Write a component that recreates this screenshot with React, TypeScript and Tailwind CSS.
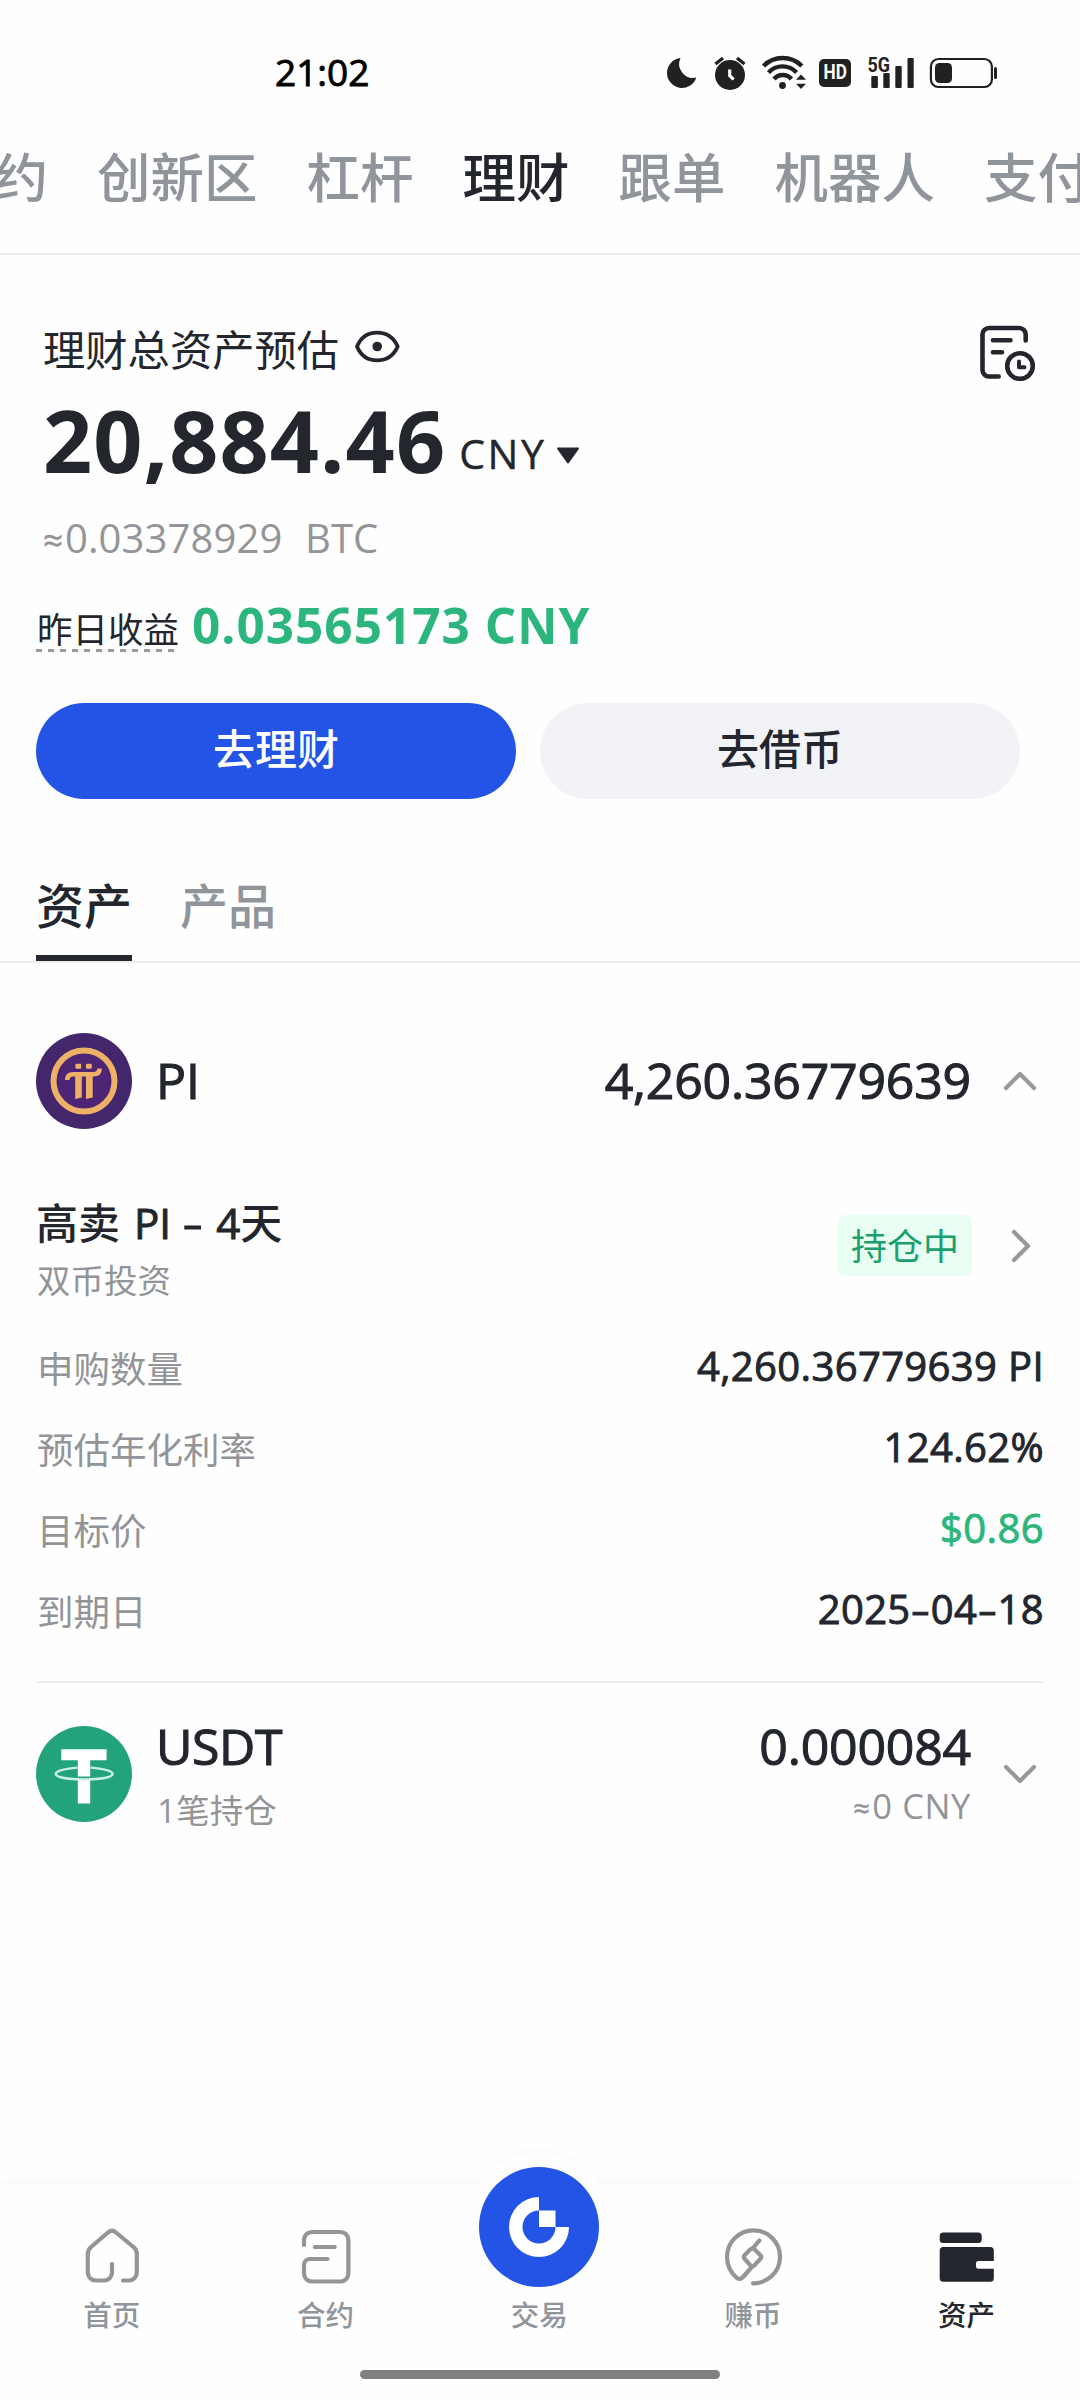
import React from 'react';

const tabs = ['合约', '创新区', '杠杆', '理财', '跟单', '机器人', '支付'];

const details = [
  { label: '申购数量', value: '4,260.36779639 PI', green: false },
  { label: '预估年化利率', value: '124.62%', green: false },
  { label: '目标价', value: '$0.86', green: true },
  { label: '到期日', value: '2025-04-18', green: false },
];

function StatusBar() {
  return (
    <div className="flex h-[145px] items-center pl-[275px]">
      <div className="w-[389px] pb-[2px] text-[37px] leading-[50px] text-black [-webkit-text-stroke:0.9px_currentColor]">21:02</div>
      <svg className="shrink-0" width="40" height="44" viewBox="664 50 40 44" fill="#212121">
        <path d="M680.5 57A15 15 0 1 0 696.3 76.5A14 14 0 0 1 680.5 57Z" />
      </svg>
      <svg className="shrink-0" width="50" height="44" viewBox="704 50 50 44">
        <circle cx="730" cy="74" r="15" fill="#212121" />
        <path d="M715.5 63L723 57M744.5 63L737 57" stroke="#212121" strokeWidth="3.4" />
        <path d="M729.7 68.5V74.5L733.6 78.5" stroke="#fff" strokeWidth="3.2" fill="none" />
      </svg>
      <svg className="shrink-0" width="58" height="44" viewBox="754 50 58 44">
        <g fill="none" stroke="#212121" strokeWidth="4.4">
          <path d="M763.5 65A27 27 0 0 1 801.8 65" />
          <path d="M768.5 71.5A19 19 0 0 1 796.5 71.5" />
          <path d="M774 78A11.5 11.5 0 0 1 791.5 78" />
        </g>
        <circle cx="782.5" cy="84.5" r="3.4" fill="#212121" />
        <path d="M796 78.7H806L801 73.5ZM796 82.8H806L801 88Z" fill="#212121" />
      </svg>
      <div className="ml-[7px] flex h-[28px] w-[32px] shrink-0 items-center justify-center rounded-[5px] bg-[#212121] text-[21px] font-bold text-white">
        <span className="scale-x-[0.82] font-['Roboto']">HD</span>
      </div>
      <svg className="ml-[9px] shrink-0" width="60" height="44" viewBox="860 50 60 44" fill="#212121">
        <text x="867.5" y="70.5" fontSize="20.5" fontWeight="700" fontFamily="Roboto" textLength="22.5" lengthAdjust="spacingAndGlyphs">5G</text>
        <rect x="871.3" y="75" width="6.6" height="12" rx="1" />
        <rect x="883.3" y="72" width="6.4" height="15" rx="1" />
        <rect x="895.3" y="65" width="6.4" height="22" rx="1" />
        <rect x="907.5" y="57" width="6.2" height="30" rx="1" />
      </svg>
      <svg className="shrink-0" width="80" height="44" viewBox="920 50 80 44">
        <rect x="930.9" y="58" width="61" height="28" rx="7.5" fill="none" stroke="#212121" strokeWidth="2.2" />
        <rect x="935" y="62" width="17" height="20" rx="4.5" fill="#212121" />
        <rect x="994" y="66" width="3" height="12" rx="1.5" fill="#212121" />
      </svg>
    </div>
  );
}

function TopTabs() {
  return (
    <div className="h-[110px] overflow-hidden border-b-2 border-[#ededef]">
      <div className="-ml-[59px] flex w-[1300px] gap-[49px] text-[53.5px] leading-[65px] font-medium whitespace-nowrap text-[#90949b]">
        {tabs.map((t) => (
          <span key={t} className={t === '理财' ? 'text-[#23262d]' : ''}>{t}</span>
        ))}
      </div>
    </div>
  );
}

function Summary() {
  return (
    <section className="pt-[67px]">
      <div className="flex h-[62px] items-start pl-[43px]">
        <span className="text-[42.3px] leading-[55px]">理财总资产预估</span>
        <svg className="mt-[3px] ml-[14px]" width="48" height="44" viewBox="353 325 48 44">
          <path d="M357 346.5C361 337 368 332.6 377 332.6S393.5 337 397.7 346.5C393.5 356 386 360.4 377 360.4S361 356 357 346.5Z" fill="none" stroke="#23262d" strokeWidth="3.8" strokeLinejoin="round" />
          <circle cx="377.2" cy="346.5" r="4.8" fill="#23262d" />
        </svg>
        <svg className="mr-[42px] ml-auto" width="60" height="62" viewBox="978 322 60 62" fill="none" stroke="#23262d" strokeWidth="4.6" strokeLinecap="round" strokeLinejoin="round">
          <path d="M1025.7 340.5V334.5A6.5 6.5 0 0 0 1019.2 328H989A6.5 6.5 0 0 0 982.5 334.5V370A6.5 6.5 0 0 0 989 376.5H998.7" />
          <path d="M993 340.3H1010.5M993 352.2H1002" />
          <circle cx="1020" cy="366" r="12.8" />
          <path d="M1019 361.5V367.3H1024.5" strokeWidth="4" />
        </svg>
      </div>
      <div className="mt-[2px] flex h-[108px] items-end pl-[43px]">
        <span className="text-[86px] leading-[108px] font-bold tracking-[1.1px]">20,884.46</span>
        <span className="ml-[13px] text-[41px] leading-[81px] tracking-[2.6px] [-webkit-text-stroke:0.4px_currentColor]">CNY</span>
        <svg className="mb-[27px] ml-[8px]" width="26" height="22" viewBox="0 0 26 22">
          <path d="M3 3.5H23L13 17.5Z" fill="#23262d" stroke="#23262d" strokeWidth="2" strokeLinejoin="round" />
        </svg>
      </div>
      <div className="mt-[19px] flex pl-[43px] text-[40px] leading-[50px] tracking-[0.1px] text-[#939598]">
        <span className="w-[262px] whitespace-nowrap">
          <span className="inline-block w-[22px] text-[35px] leading-[30px] [-webkit-text-stroke:0.5px_currentColor]">≈</span>0.03378929
        </span>
        <span>BTC</span>
      </div>
      <div className="mt-[30px] flex h-[60px] pl-[36px]">
        <div className="mt-[17px] w-[143px]">
          <div className="pl-[1px] text-[35.5px] leading-[39px] whitespace-nowrap">昨日收益</div>
          <div className="h-[3px] w-[139px] bg-[repeating-linear-gradient(to_right,#97999c_0_6px,transparent_6px_12px)]" />
        </div>
        <span className="ml-[13px] pt-[1px] text-[49.5px] leading-[62px] font-bold tracking-[1px] whitespace-nowrap text-[#2cb67d]">0.03565173 CNY</span>
      </div>
      <div className="mt-[50px] flex gap-[24px] pl-[36px] text-[42px] font-medium">
        <button className="h-[96px] w-[480px] rounded-full bg-[#2354e6] pb-[6px] text-white">去理财</button>
        <button className="h-[96px] w-[480px] rounded-full bg-[#f1f3f7] pb-[6px]">去借币</button>
      </div>
    </section>
  );
}

function Chevron({ direction }: { direction: 'up' | 'down' | 'right' }) {
  const d = {
    up: 'M6 27L20 13L34 27',
    down: 'M6 13L20 27L34 13',
    right: 'M14 6L28 20L14 34',
  }[direction];
  return (
    <svg className="shrink-0" width="40" height="40" viewBox="0 0 40 40" fill="none" stroke="#97999c" strokeWidth="4.2" strokeLinecap="round" strokeLinejoin="round">
      <path d={d} />
    </svg>
  );
}

/* Hyphens are drawn wider than the font's own. */
function WideHyphens({ text }: { text: string }) {
  return (
    <>
      {text.split('').map((c, i) =>
        c === '-' ? <span key={i} className="mx-[3.5px] inline-block scale-x-150">-</span> : <React.Fragment key={i}>{c}</React.Fragment>,
      )}
    </>
  );
}

function PiLogo() {
  return (
    <svg width="96" height="96" viewBox="36 1033 96 96">
      <circle cx="84" cy="1081" r="48" fill="#43266b" />
      <circle cx="84" cy="1081" r="30.5" fill="#4d2574" stroke="#eeb168" strokeWidth="6" />
      <g fill="#eeb168">
        <rect x="75.4" y="1063.8" width="5.8" height="5" rx="1" />
        <rect x="86" y="1063.8" width="5.8" height="5" rx="1" />
        <path d="M75.2 1074H81.8V1097.5L75.2 1099ZM86 1074H92.7V1097.5L86 1099Z" />
      </g>
      <path d="M67.3 1080C67.3 1076 69.5 1074.2 73 1074.2H93.5C97.5 1074.2 99.6 1072.5 99.6 1068.5" fill="none" stroke="#eeb168" strokeWidth="4.6" />
    </svg>
  );
}

function TetherLogo() {
  return (
    <svg width="96" height="96" viewBox="36 1726 96 96">
      <circle cx="84" cy="1774" r="48" fill="#23a37c" />
      <path d="M61.3 1749.2H106.6V1760.3H90.2V1776.5H77.8V1760.3H61.3ZM77.8 1780H90.2V1803.5H77.8Z" fill="#fff" />
      <path d="M77.5 1767.6C66 1768.5 55.8 1770.6 55.8 1773.8C55.8 1777.6 68 1779.4 84.2 1779.4S112.6 1777.6 112.6 1773.8C112.6 1770.6 102 1768.5 90.5 1767.6" fill="none" stroke="#c9f0e2" strokeWidth="2.4" />
    </svg>
  );
}

function Assets() {
  return (
    <>
      <div className="flex h-[164px] gap-[48px] border-b-2 border-[#ededef] pt-[76px] pl-[36px] text-[48px] leading-[61px] font-medium">
        <div className="flex h-[86px] w-[96px] flex-col justify-between">
          <span>资产</span>
          <div className="h-[6px] bg-[#23262d]" />
        </div>
        <span className="text-[#90949b]">产品</span>
      </div>

      <div className="mt-[70px] flex h-[96px] items-center pr-[40px] pl-[36px] text-[50px] [-webkit-text-stroke:1.1px_currentColor]">
        <PiLogo />
        <span className="ml-[24px] pb-[2px] leading-[60px]">PI</span>
        <span className="mr-[29px] ml-auto pb-[2px] leading-[60px] tracking-[-0.2px]">4,260.36779639</span>
        <Chevron direction="up" />
      </div>

      <div className="mt-[66px] flex items-start pr-[40px] pl-[36px]">
        <div>
          <div className="text-[42px] leading-[55px] font-medium whitespace-pre">
            <span>高卖</span>
            <span className="[-webkit-text-stroke:1px_currentColor]">
              <span className="ml-[3px]"> PI </span><span className="mx-[4px] inline-block scale-x-150">-</span><span className="ml-[2px]"> 4</span>
            </span>
            <span>天</span>
          </div>
          <div className="mt-[10px] pl-[1px] text-[33.5px] leading-[40px] text-[#929498]">双币投资</div>
        </div>
        <div className="mt-[20px] ml-auto h-[61px] w-[134px] rounded-[8px] bg-[#e9fef2] text-center text-[36px] leading-[64px] text-[#1aa06d]">持仓中</div>
        <div className="mt-[31px] ml-[28px]">
          <Chevron direction="right" />
        </div>
      </div>

      <div className="mt-[28px] px-[36px]">
        {details.map((r) => (
          <div key={r.label} className="flex h-[81px] items-center justify-between">
            <span className="pl-[1px] text-[36.5px] leading-[50px] text-[#929498]">{r.label}</span>
            <span className={r.green ? 'pb-[5px] text-[40px] leading-[50px] tracking-[0.4px] text-[#2cb67d] [-webkit-text-stroke:0.9px_currentColor]' : 'pb-[5px] text-[40px] leading-[50px] tracking-[0.35px] [-webkit-text-stroke:0.9px_currentColor]'}>
              <WideHyphens text={r.value} />
            </span>
          </div>
        ))}
      </div>

      <div className="mx-[36px] mt-[29px] h-[2px] bg-[#ededef]" />

      <div className="mt-[43px] flex h-[96px] items-center pr-[40px] pl-[36px]">
        <TetherLogo />
        <div className="mt-[3px] ml-[24px]">
          <div className="text-[50px] leading-[50px] tracking-[-0.4px] [-webkit-text-stroke:1.1px_currentColor]">USDT</div>
          <div className="mt-[19px] pl-[1px] text-[33.5px] leading-[40px] text-[#929498]">1笔持仓</div>
        </div>
        <div className="mt-[3px] mr-[29px] ml-auto text-right">
          <div className="text-[50px] leading-[50px] tracking-[-0.2px] [-webkit-text-stroke:1.1px_currentColor]">0.000084</div>
          <div className="mt-[19px] pb-[9px] text-[34.5px] leading-[31px] tracking-[0.6px] text-[#929498]">
            <span className="inline-block w-[19px] text-left text-[29px] leading-[26px] [-webkit-text-stroke:0.5px_currentColor]">≈</span>0 CNY
          </div>
        </div>
        <Chevron direction="down" />
      </div>
    </>
  );
}

function BottomNav() {
  const item = 'flex w-[213.7px] flex-col items-center';
  const label = 'mt-[9px] text-[28.5px] leading-[40px] font-medium';
  return (
    <nav className="relative mt-auto h-[216px] bg-[#fefefe] shadow-[0_-2px_6px_rgba(30,40,60,0.03)]">
      <div className="absolute -top-[32px] left-[464px] h-[150px] w-[150px] rounded-full bg-[#fefefe] shadow-[0_-2px_6px_rgba(30,40,60,0.025)]" />
      <div className="absolute top-0 left-[440px] h-[130px] w-[200px] bg-[#fefefe]" />
      <div className="relative flex h-[186px] pt-[42px] pl-[5px] text-[#90949b]">
        <div className={item}>
          <svg width="60" height="60" viewBox="82 2226 60 60" fill="none" stroke="#939598" strokeWidth="4.2" strokeLinecap="round" strokeLinejoin="round">
            <path d="M112 2264V2272.5A8 8 0 0 1 104 2280.5H95.8A8 8 0 0 1 87.8 2272.5V2254C87.8 2251 88.7 2249 91 2247L108 2232.5Q112 2229 116 2232.5L133.5 2247C136 2249 136.8 2251 136.8 2254V2272.5A8 8 0 0 1 128.8 2280.5H123" />
          </svg>
          <span className={label}>首页</span>
        </div>
        <div className={item}>
          <svg width="60" height="60" viewBox="296 2226 60 60" fill="none" stroke="#939598" strokeWidth="4.2" strokeLinecap="round" strokeLinejoin="round">
            <path d="M304 2245V2240A8 8 0 0 1 312 2232H340.4A8 8 0 0 1 348.4 2240V2273.5A8 8 0 0 1 340.4 2281.5H312A8 8 0 0 1 304 2273.5V2265A6 6 0 0 1 310 2259H327.5M314.8 2247H334.7" />
          </svg>
          <span className={label}>合约</span>
        </div>
        <div className={item}>
          <svg className="-mt-[62px] mb-[4px]" width="120" height="123" viewBox="479 2164 120 123">
            <circle cx="539" cy="2227" r="60" fill="#2354e6" />
            <path d="M539 2197A30 30 0 1 0 569 2227H555.5A16.5 16.5 0 1 1 539 2210.5V2227H555.5V2210.5H539Z" fill="#fff" />
          </svg>
          <span className="mt-[4px] text-[28.5px] leading-[40px] font-medium">交易</span>
        </div>
        <div className={item}>
          <svg width="60" height="60" viewBox="723 2226 60 60" fill="none" stroke="#939598" strokeWidth="4.2" strokeLinecap="round" strokeLinejoin="round">
            <path d="M753 2283.3A26.5 26.5 0 1 0 727 2256.7C727 2265 730.5 2272 736 2277.3Q740 2281 743.5 2276.5L751.8 2267" />
            <path d="M750.2 2249.5L744.8 2255Q742.8 2257 744.8 2259L750.2 2265.2Q752.4 2267.5 754.6 2265.2L760.2 2259Q762.2 2257 760.2 2255L754.6 2249.5Q752.4 2247.5 750.2 2249.5ZM753.5 2247.5L759.4 2240.5" />
          </svg>
          <span className={label}>赚币</span>
        </div>
        <div className={item}>
          <svg width="60" height="60" viewBox="937 2226 60 60" fill="#23262d">
            <rect x="939.7" y="2232.5" width="42" height="10.5" rx="3.5" />
            <path d="M943.2 2247H990.3A3.5 3.5 0 0 1 993.8 2250.5V2261H978.5A2.5 2.5 0 0 0 976 2263.5V2266.2A2.5 2.5 0 0 0 978.5 2268.7H993.8V2278.2A3.5 3.5 0 0 1 990.3 2281.7H943.2A3.5 3.5 0 0 1 939.7 2278.2V2250.5A3.5 3.5 0 0 1 943.2 2247Z" />
          </svg>
          <span className="mt-[9px] text-[28.5px] leading-[40px] font-medium text-[#23262d]">资产</span>
        </div>
      </div>
      <div className="mx-auto h-[9px] w-[360px] rounded-full bg-[#808080]" />
    </nav>
  );
}

export default function App() {
  return (
    <div className="flex h-[2400px] w-[1080px] flex-col overflow-hidden bg-[#fefefe] font-['Open_Sans','Noto_Sans_CJK_SC',sans-serif] text-[#23262d]">
      <StatusBar />
      <TopTabs />
      <Summary />
      <Assets />
      <BottomNav />
    </div>
  );
}
